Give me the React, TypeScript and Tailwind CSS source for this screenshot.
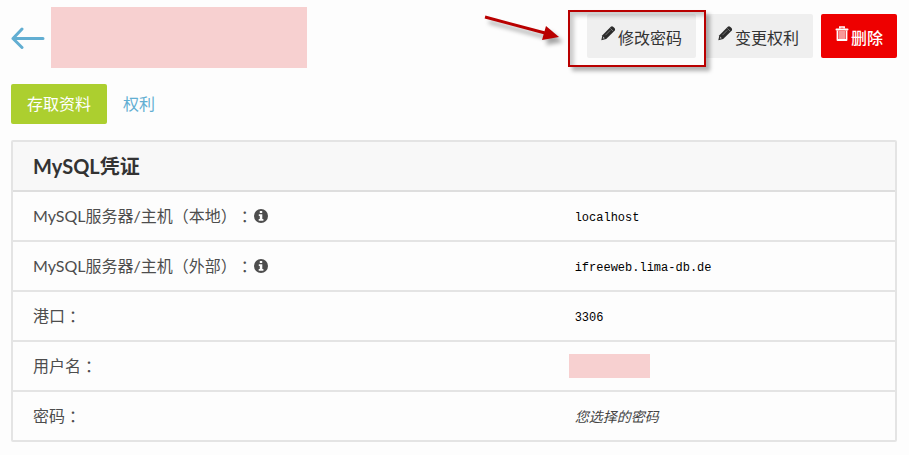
import type { ReactNode } from 'react'

const PencilIcon = () => (
    <svg viewBox="0 0 16 16" className="size-4" aria-hidden="true">
        <path
            fill="#2b2b2b"
            d="M9.8.8Q11-.2 12.4 1L13.5 2.1Q14.6 3.4 13.6 4.8L5.2 13 .3 14.2 1.4 9.2Z"
        />
        <path stroke="#888" strokeWidth="0.8" d="M4.4 9.2 9.2 4.4" />
        <path stroke="#aaa" strokeWidth="0.6" d="M9.4 2.4 12.2 5.2" />
        <path fill="#bbb" d="M2.2 10.6 3.8 12.2 1.8 12.8Z" />
    </svg>
)

const TrashIcon = () => (
    <svg viewBox="0 0 14 16" className="h-4 w-3.5" fill="none" stroke="currentColor" aria-hidden="true">
        <path strokeWidth="1.5" d="M4.8 2.5V1h4.4v1.5" />
        <path strokeWidth="2" strokeLinecap="round" d="M1.5 3.5h11" />
        <path strokeWidth="1.8" strokeLinejoin="round" d="M2.5 4.5V14h9V4.5" />
        <path strokeWidth="1.2" d="M5 5v8M7 5v8M9 5v8" />
    </svg>
)

const InfoIcon = () => (
    <svg viewBox="0 0 14 14" className="size-3.5" aria-hidden="true">
        <circle cx="7" cy="7" r="7" fill="currentColor" />
        <path fill="#fdfdfd" d="M5.8 2h2.4v2H5.8ZM4.8 5.2h3.5v4.9h1.1v1.7H4.7v-1.7h1.1V6.9h-1Z" />
    </svg>
)

const BackIcon = () => (
    <svg
        viewBox="0 0 34 22"
        className="h-[22px] w-[34px]"
        fill="none"
        stroke="currentColor"
        strokeWidth="3"
        strokeLinecap="round"
        strokeLinejoin="round"
        aria-hidden="true"
    >
        <path d="M11 2 2 11.5l9 9M2 11.5h30" />
    </svg>
)

const Highlight = () => (
    <div className="pointer-events-none absolute -top-1 -left-[19px] z-10 h-[57px] w-[138px] border-2 border-[#b90000] shadow-[4px_4px_4px_rgba(0,0,0,0.3),inset_4px_4px_4px_rgba(0,0,0,0.2)]">
        <svg
            viewBox="0 0 90 40"
            className="absolute -top-0.5 -left-[90px] h-10 w-[90px] overflow-visible drop-shadow-[4px_5px_2px_rgba(0,0,0,0.35)]"
            aria-hidden="true"
        >
            <path stroke="#b90000" strokeWidth="3" d="M5 7 65 23" />
            <path fill="#b90000" d="M66 16 79 27 62 30Z" />
        </svg>
    </div>
)

type ButtonProps = { icon: ReactNode; label: string; danger?: boolean }

const ActionButton = ({ icon, label, danger }: ButtonProps) => (
    <button
        type="button"
        className={
            danger
                ? 'flex h-11 items-center gap-0.5 rounded-xs bg-[#ee0000] px-3.5 font-medium text-white'
                : 'flex h-11 items-center gap-px rounded-xs bg-[#efefef] px-3.5 text-[#333]'
        }
    >
        <span className="pb-1">{icon}</span>
        <span className="pt-1">{label}</span>
    </button>
)

type Row = { label: string; info?: boolean; value: ReactNode }

const rows: Row[] = [
    { label: 'MySQL服务器/主机（本地）', info: true, value: 'localhost' },
    { label: 'MySQL服务器/主机（外部）', info: true, value: 'ifreeweb.lima-db.de' },
    { label: '港口', value: '3306' },
    { label: '用户名', value: <span className="-ml-1.5 block h-6 w-[81px] bg-[#f7d0d0]" /> },
    { label: '密码', value: <em className="text-sm leading-4 text-[#444]">您选择的密码</em> },
]

const Credentials = () => (
    <div className="mt-4 rounded-xs border-2 border-[#e4e4e4]">
        <table className="w-full table-fixed border-separate border-spacing-0 text-left">
            <colgroup>
                <col className="w-[63%]" />
                <col />
            </colgroup>
            <thead>
                <tr>
                    <th
                        colSpan={2}
                        className="h-[50px] border-b-2 border-[#dedede] bg-[#f8f8f8] px-5 text-xl leading-6 font-bold text-[#333]"
                    >
                        MySQL凭证
                    </th>
                </tr>
            </thead>
            <tbody>
                {rows.map((row) => (
                    <tr key={row.label} className="group">
                        <th
                            scope="row"
                            className="h-[50px] border-b-2 border-[#e4e4e4] pl-5 font-normal group-last:h-12 group-last:border-b-0"
                        >
                            <span className="flex items-center [text-spacing-trim:space-all]">
                                {row.label}
                                <span className="font-['Noto_Sans_CJK_TC',sans-serif]" lang="zh-TW">
                                    ：
                                </span>
                                {row.info && (
                                    <span className="ml-px">
                                        <InfoIcon />
                                    </span>
                                )}
                            </span>
                        </th>
                        <td
                            className={`border-b-2 border-[#e4e4e4] pl-1.5 font-['Liberation_Mono','Noto_Sans_CJK_SC',monospace] text-xs text-black group-last:border-b-0 ${
                                row.label === '用户名' ? '' : 'pt-1'
                            }`}
                        >
                            {row.value}
                        </td>
                    </tr>
                ))}
            </tbody>
        </table>
    </div>
)

export default function App() {
    return (
        <main
            lang="zh-CN"
            className="min-h-screen bg-[#fdfdfd] pt-[7px] pr-3 pb-3 pl-[11px] font-['Lato','Noto_Sans_CJK_SC',sans-serif] text-base leading-6 text-[#4d4d4d]"
        >
            <header className="flex items-center gap-1.5">
                <a href="#" aria-label="返回" className="text-[#62aed2]">
                    <BackIcon />
                </a>
                <div className="h-[61px] w-64 bg-[#f7d0d0]" />
                <div className="ml-auto flex gap-2 pb-[3px]">
                    <div className="relative">
                        <ActionButton icon={<PencilIcon />} label="修改密码" />
                        <Highlight />
                    </div>
                    <ActionButton icon={<PencilIcon />} label="变更权利" />
                    <ActionButton icon={<TrashIcon />} label="删除" danger />
                </div>
            </header>
            <nav className="mt-4 flex">
                <a href="#" className="rounded-xs bg-[#accf2f] px-4 py-2 text-white">
                    存取资料
                </a>
                <a href="#" className="px-4 py-2 text-[#62aed2]">
                    权利
                </a>
            </nav>
            <Credentials />
        </main>
    )
}
